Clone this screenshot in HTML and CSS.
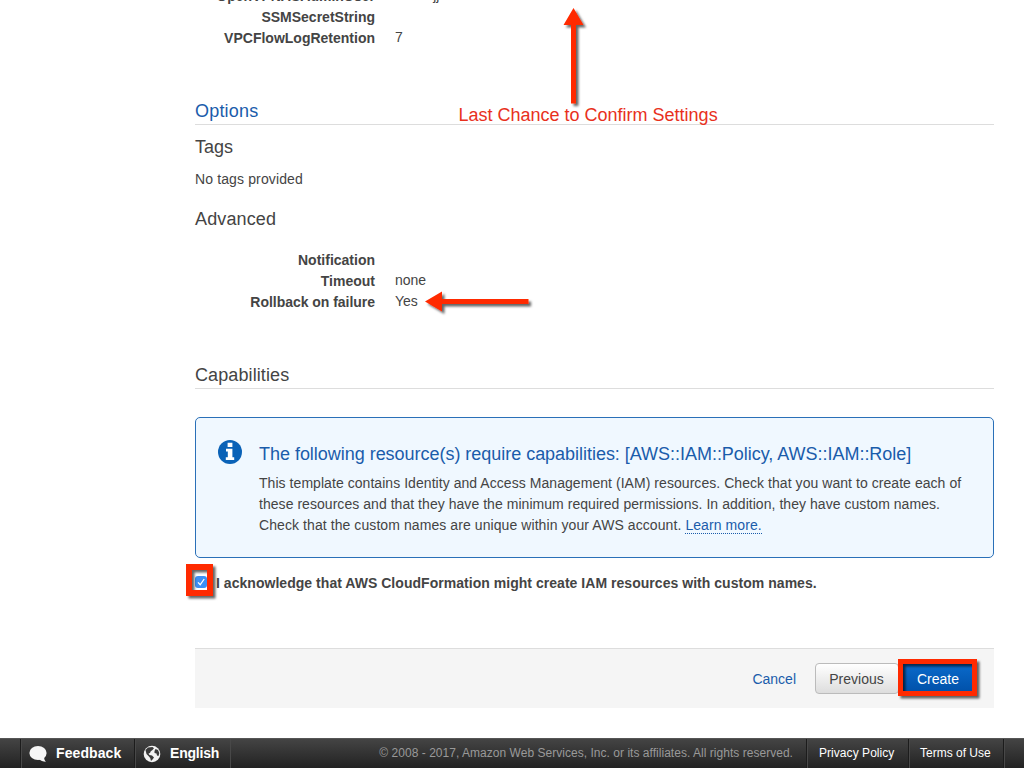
FILE: index.html
```html
<!DOCTYPE html>
<html lang="en">
<head>
<meta charset="utf-8">
<title>Create Stack - Review</title>
<link rel="stylesheet" href="styles.css">
</head>
<body>
<div class="page">
  <main class="content">
    <dl class="params params-top">
      <dt>OpenVPNASAdminUser</dt><dd>adminjj</dd>
      <dt>SSMSecretString</dt><dd></dd>
      <dt>VPCFlowLogRetention</dt><dd>7</dd>
    </dl>
    <h2 class="section options">Options</h2>
    <h3 class="sub tags">Tags</h3>
    <p class="none">No tags provided</p>
    <h3 class="sub advanced">Advanced</h3>
    <dl class="params">
      <dt>Notification</dt><dd></dd>
      <dt>Timeout</dt><dd>none</dd>
      <dt class="rollback">Rollback on failure</dt><dd>Yes</dd>
    </dl>
    <h2 class="section capabilities">Capabilities</h2>
    <section class="notice">
      <svg class="info" viewBox="0 0 24 24"><circle cx="12" cy="12" r="12" fill="#0a62b7"/><path fill="#fff" d="M9.600 2.800h4.800v4.200H9.600zM8 8.800h6.400v8.400H16.200V20H7.800v-2.800h2v-5.600H8z"/></svg>
      <div class="notice-body">
        <h4 class="notice-title">The following resource(s) require capabilities: [AWS::IAM::Policy, AWS::IAM::Role]</h4>
        <p class="line-first">This template contains Identity and Access Management (IAM) resources. Check that you want to create each of</p>
        <p class="line-second">these resources and that they have the minimum required permissions. In addition, they have custom names.</p>
        <p class="line-third">Check that the custom names are unique within your AWS account. <a class="learn">Learn more.</a></p>
      </div>
    </section>
    <label class="ack"><span class="check"><svg viewBox="0 0 12 12"><path d="M3 6.400l2.200 2.400L9.200 3" fill="none" stroke="#fff" stroke-width="1.300"/></svg></span><span>I acknowledge that AWS CloudFormation might create IAM resources with custom names.</span></label>
    <div class="actions">
      <a class="cancel">Cancel</a>
      <button class="btn previous">Previous</button>
      <button class="btn create">Create</button>
    </div>
  </main>
  <footer class="footer">
    <div class="item feedback"><svg class="ficon" viewBox="0 0 18 18"><ellipse cx="9" cy="8" rx="8.600" ry="6.900" fill="#f6f6f6"/><path fill="#f6f6f6" d="M9.500 14C11.500 15.500 14 16.800 17 16.800C15.500 15.500 15 14 15.200 11z"/></svg><span>Feedback</span></div>
    <div class="item english"><svg class="ficon" viewBox="0 0 18 18"><circle cx="9" cy="9" r="8.300" fill="#f2f2f2"/><path fill="#3a3a3a" d="M2.500 5L5 2.600L9.500 2L11 3.200L9.500 5L7.800 6.200L7 8L5.500 8.500L6.500 10L9 10.500L11 12.500L9.500 14.500L8 16L7.200 13L5.500 11L3.500 9zM12.500 4L15 5L16.300 8L15.500 11L14 10.500L13.500 8.500L11.500 8L11.500 6z"/></svg><span>English</span></div>
    <div class="copyright">© 2008 - 2017, Amazon Web Services, Inc. or its affiliates. All rights reserved.</div>
    <div class="item privacy">Privacy Policy</div>
    <div class="item terms">Terms of Use</div>
    <div class="item end"></div>
  </footer>
  <svg class="annotation" viewBox="0 0 1024 768">
    <defs><filter id="shadow" x="-50%" y="-50%" width="200%" height="200%"><feDropShadow dx="2.500" dy="2.500" stdDeviation="1.300" flood-color="#000" flood-opacity=".6"/></filter></defs>
    <g fill="#ff2b00" filter="url(#shadow)">
      <path d="M573.500 8L583.500 25H576V103.500H571V25H563.500z"/>
      <path d="M425 301.500L442 291.500V299H528.500V304H442V311.500z"/>
      <path fill-rule="evenodd" d="M186 564h27v32h-27zM192 570v20h15v-20z"/>
      <path fill-rule="evenodd" d="M898 659h79v37h-79zM903 664v27h69v-27z"/>
    </g>
  </svg>
  <div class="confirm-note">Last Chance to Confirm Settings</div>
</div>
</body>
</html>
```

FILE: styles.css
```css
* { box-sizing: border-box; }
body { margin: 0; background: #fff; color: #444; font: 14px/21px "Liberation Sans", Arial, sans-serif; }
h2, h3, h4, p, dl, dd { margin: 0; font-weight: normal; }
.page { position: relative; width: 1024px; height: 768px; overflow: hidden; display: flex; flex-direction: column; }
.content { flex: 1; margin-left: 195px; width: 799px; }
.params { display: grid; grid-template-columns: 180px 1fr; column-gap: 20px; grid-auto-rows: 21px; }
.params dt { font-weight: bold; text-align: right; white-space: nowrap; }
.params dd { line-height: 19px; }
.params .rollback { letter-spacing: -0.03px; }
.params-top { margin-top: -14px; }
.section { font-size: 18px; line-height: 29px; height: 28px; border-bottom: 1px solid #ddd; }
.options { margin-top: 48px; color: #1a5cab; letter-spacing: 0.2px; }
.sub { font-size: 18px; line-height: 24px; }
.tags { margin-top: 10px; }
.none { margin-top: 10px; letter-spacing: 0.13px; }
.advanced { margin: 17px 0 19px; letter-spacing: 0.12px; }
.capabilities { margin-top: 48px; letter-spacing: 0.1px; }
.notice { display: flex; margin-top: 28px; height: 141px; padding: 22px 22px 0; background: #f0f8ff; border: 1px solid #2a70b8; border-radius: 5px; white-space: nowrap; }
.info { width: 24px; height: 24px; margin-right: 17px; }
.notice-title { font-size: 18px; line-height: 29px; margin-bottom: 4px; color: #1a5cab; letter-spacing: -0.028px; }
.line-first { letter-spacing: 0.053px; }
.line-second { letter-spacing: 0.045px; }
.line-third { letter-spacing: 0.08px; }
.learn { color: #1a5cab; border-bottom: 1px dotted #1a5cab; }
.ack { display: flex; align-items: center; margin-top: 15px; height: 21px; font-weight: bold; white-space: nowrap; letter-spacing: 0.036px; }
.check { width: 12px; height: 12px; margin-right: 9px; margin-top: -4px; border-radius: 3px; background: #3b8ff5; }
.check svg { display: block; }
.actions { display: flex; align-items: center; justify-content: flex-end; margin-top: 54px; height: 60px; padding-right: 19px; background: #f5f5f5; border-top: 1px solid #ddd; }
.cancel { color: #1a5cab; margin-right: 19px; padding-top: 2px; }
.btn { height: 31px; padding: 2px 0 0; border: 1px solid #bbb; border-radius: 4px; font: inherit; color: #444; background: linear-gradient(#fff, #ddd); }
.previous { width: 84px; padding-right: 1px; }
.create { width: 74px; margin-left: 2px; color: #fff; border-color: #004b91; background: linear-gradient(#0a6acb, #0050a8); }
.footer { display: flex; height: 30px; padding-left: 20px; line-height: 29px; background: linear-gradient(#444, #222); border-top: 1px solid #555; color: #fff; white-space: nowrap; }
.item { border-left: 1px solid #1c1c1c; box-shadow: inset 1px 0 #484848; display: flex; align-items: center; }
.feedback { width: 114px; padding-left: 8px; font-weight: bold; letter-spacing: 0.1px; }
.english { width: 96px; padding-left: 8px; font-weight: bold; letter-spacing: -0.2px; }
.ficon { width: 18px; height: 18px; margin-right: 9px; }
.copyright { flex: 1; border-left: 1px solid #484848; color: #999; font-size: 12px; text-align: right; padding-right: 13px; letter-spacing: 0.03px; }
.privacy { width: 102px; padding-left: 12px; font-size: 12px; letter-spacing: 0.05px; }
.terms { width: 95px; padding-left: 11px; font-size: 12px; }
.end { width: 21px; }
.annotation { position: absolute; left: 0; top: 0; width: 1024px; height: 768px; }
.confirm-note { position: absolute; left: 458.500px; top: 104px; font-size: 18px; line-height: 22px; color: #e8301c; white-space: nowrap; }
```
